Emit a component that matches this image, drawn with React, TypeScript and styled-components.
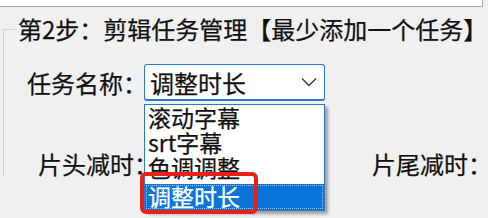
import React from "react";
import styled, { createGlobalStyle } from "styled-components";

const Global = createGlobalStyle`
  html, body { margin: 0; padding: 0; background: #f0f0f0; }
  body {
    width: 488px; height: 218px; overflow: hidden;
    font-family: "Noto Sans CJK SC", "Noto Sans", sans-serif;
    color: #111111;
    -webkit-text-stroke: 0.25px currentColor;
  }
`;

const Page = styled.div`
  position: relative;
  width: 488px;
  height: 218px;
`;

const TopStrip = styled.div`
  width: 482px;
  height: 6px;
  background: #ffffff;
  border-bottom: 1px solid #a9a9a9;
  border-right: 1px solid #a9a9a9;
`;

const Group = styled.fieldset`
  margin: 10px 0 0 3px;
  padding: 0;
  border: none;
  border-top: 1px solid #d2d2d2;
  border-left: 1px solid #d2d2d2;
  min-width: 0;
`;

const Legend = styled.legend`
  margin-left: 11px;
  padding: 0 0 0 3px;
  font-size: 24px;
  line-height: 24px;
  white-space: nowrap;
`;

const Row = styled.div<{ $top: number; $cols: string }>`
  display: grid;
  grid-template-columns: ${(p) => p.$cols};
  align-items: center;
  margin-top: ${(p) => p.$top}px;
`;

const Label = styled.span<{ $pad?: number }>`
  font-size: 24px;
  line-height: 24px;
  padding-left: ${(p) => p.$pad ?? 0}px;
  white-space: nowrap;
`;

const Combo = styled.div`
  box-sizing: border-box;
  width: 181px;
  height: 37px;
  background: #ffffff;
  border: 1.5px solid #2a78d2;
  border-bottom-width: 2px;
  border-radius: 3px;
  display: flex;
  align-items: center;
  justify-content: space-between;
  padding: 0 7px 0 5px;
  font-size: 24px;
`;

const Popup = styled.div`
  position: absolute;
  left: 144px;
  top: 104px;
  width: 181px;
  box-sizing: border-box;
  background: #ffffff;
  border: 1px solid #2a78d2;
  box-shadow: 3px 3px 3px rgba(0, 0, 0, 0.35);
  display: flex;
  flex-direction: column;
`;

const Item = styled.div<{ $h: number; $selected?: boolean }>`
  height: ${(p) => p.$h}px;
  line-height: 25px;
  font-size: 23px;
  padding-left: 3px;
  overflow: hidden;
  white-space: nowrap;
  background: ${(p) => (p.$selected ? "#0a74d8" : "transparent")};
  color: ${(p) => (p.$selected ? "#ffffff" : "#111111")};
  outline: ${(p) => (p.$selected ? "1px dotted #9cc6f0" : "none")};
  outline-offset: -2px;
`;

const Highlight = styled.div`
  position: absolute;
  left: 140px;
  top: 172px;
  width: 118px;
  height: 42px;
  box-sizing: border-box;
  border: 4px solid #e6211a;
  border-radius: 6px;
`;

const Chevron = () => (
  <svg width="16" height="10" viewBox="0 0 16 10">
    <path d="M1 1.5 L8 8.5 L15 1.5" fill="none" stroke="#3a3a3a" strokeWidth="1.3" />
  </svg>
);

export default function App() {
  return (
    <Page>
      <Global />
      <TopStrip />
      <Group>
        <Legend>第2步：剪辑任务管理【最少添加一个任务】</Legend>
        <Row $top={23} $cols="140px 181px">
          <Label $pad={23}>任务名称：</Label>
          <Combo>
            <span>调整时长</span>
            <Chevron />
          </Combo>
        </Row>
        <Row $top={51} $cols="368px auto">
          <Label $pad={34}>片头减时：</Label>
          <Label>片尾减时：</Label>
        </Row>
      </Group>
      <Popup>
        <Item $h={25}>滚动字幕</Item>
        <Item $h={25}>srt字幕</Item>
        <Item $h={29}>色调调整</Item>
        <Item $h={26} $selected>调整时长</Item>
      </Popup>
      <Highlight />
    </Page>
  );
}
